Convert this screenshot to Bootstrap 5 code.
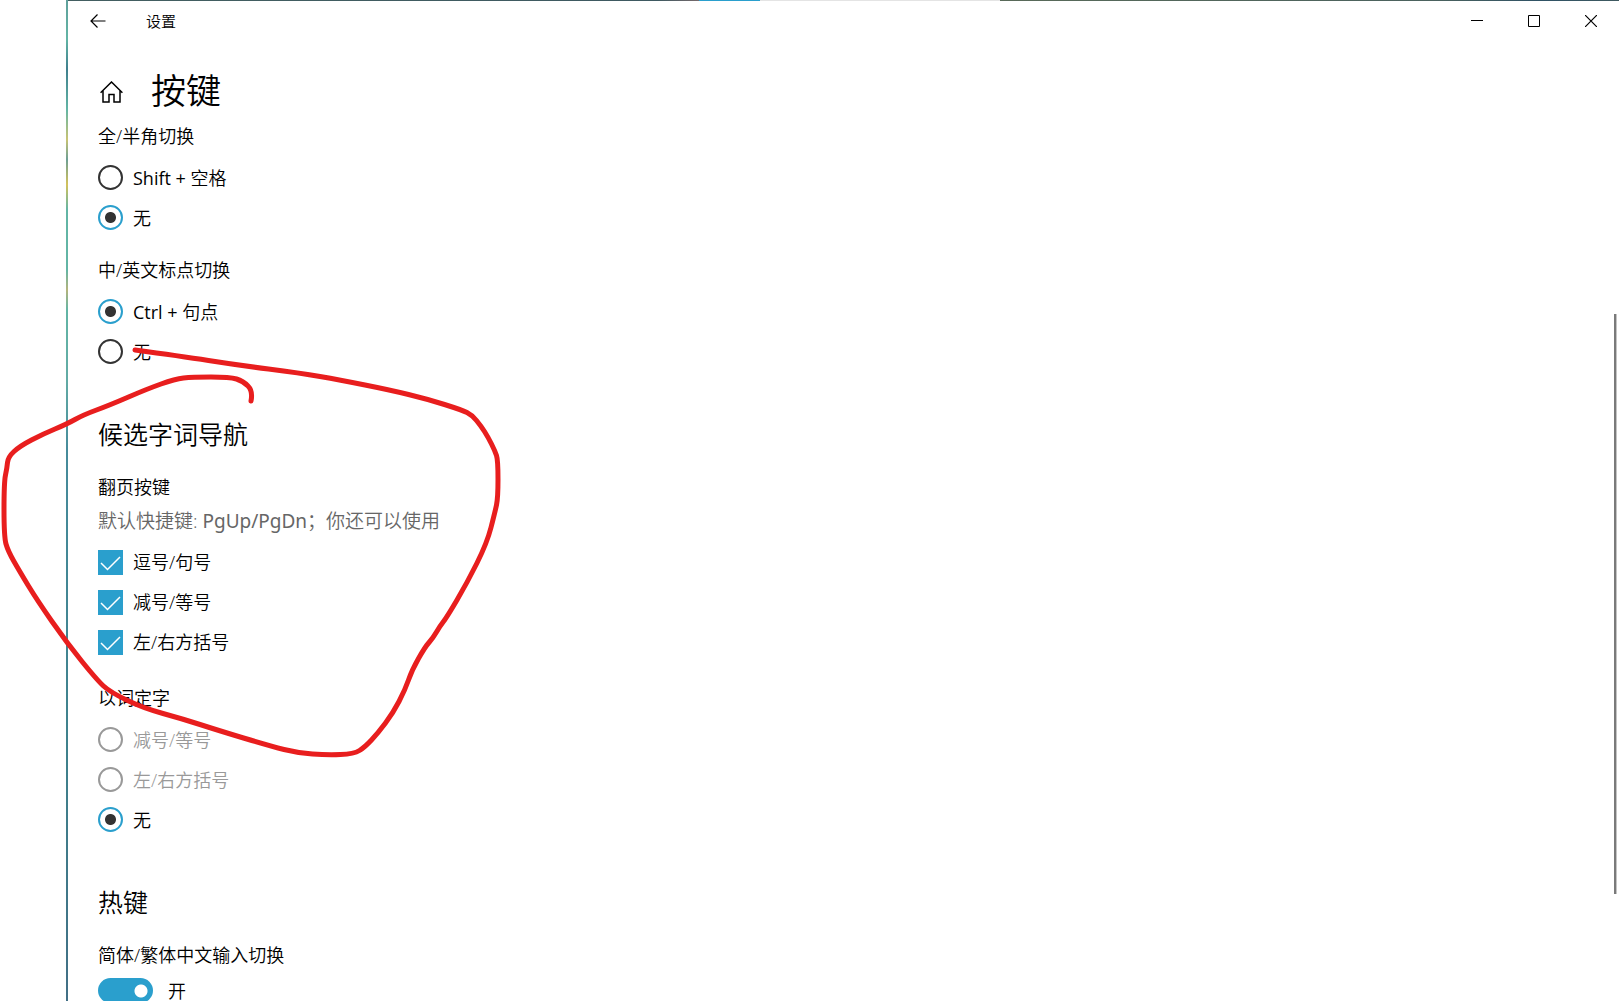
<!DOCTYPE html>
<html lang="zh-CN">
<head>
<meta charset="utf-8">
<meta name="viewport" content="width=device-width, initial-scale=1">
<title>设置</title>
<link href="https://cdn.jsdelivr.net/npm/bootstrap@5.3.0/dist/css/bootstrap.min.css" rel="stylesheet">
<style>
:root { --accent: #2a9fcd; --ink: #333; }
body { font-family: "Open Sans", "Noto Sans CJK SC", sans-serif; font-weight: 350; font-size: 18px; line-height: 28px; color: #000; background: #fff; padding-left: 66px; }
.win { border-left: 2px solid; border-image: linear-gradient(#5f9f9b 0, #62b5a5 4%, #3f7f8d 7%, #62b5a5 11%, #c9c474 14%, #6d9f94 16%, #d4c25b 18.5%, #62b5a5 21%, #62b5a5 27%, #b5b47c 29%, #62b5a5 31%, #62aba5 38%, #468b9b 45%, #3f818c 75%, #416f85 100%) 1; }
.topline { height: 1px; background: linear-gradient(90deg, #435f61 0, #3e5961 38%, #776a6c 40.7%, var(--accent) 40.7%, var(--accent) 44.6%, #e4e4e4 44.6%, #e4e4e4 60.1%, #596a59 60.1%, #4b625e 88%, #2f5265 95%, #3f5a60 100%); }
.titlebar { height: 39px; font-size: 15px; line-height: 20px; }
.titlebar button { border: 0; background: none; padding: 0; height: 39px; width: 57px; color: #000; display: flex; align-items: center; justify-content: center; }
.titlebar .back { width: 59px; margin-right: 19px; }
.titlebar svg, .home svg { display: block; }
.page-head { height: 82px; padding: 11px 0 0 32px; gap: 28px; }
.page-head h1 { font-size: 35px; line-height: 80px; font-weight: 350; margin: 0; }
.home { color: #000; padding-top: 30px; }
.pane { padding-left: 30px; }
.pane h2 { font-size: 25px; line-height: 40px; font-weight: 350; margin: 43px 0 19px; }
.pane legend, .grp-title { font-size: 18px; line-height: 28px; margin: 0 0 7px; float: none; }
.grp + .grp { margin-top: 19px; }
.grp.after-checks { margin-top: 22px; }
.hint { font-size: 19px; line-height: 31px; color: #666; margin: -2px 0 5px; }
.hint kbd { font: inherit; font-family: "Noto Sans", sans-serif; font-weight: 400; line-height: 1; color: inherit; background: none; padding: 0; }
.opt { height: 40px; gap: 10px; }
.opt input { appearance: none; width: 25px; height: 25px; margin: 0; flex: none; }
.opt input[type=radio] { border: 2px solid var(--ink); border-radius: 50%; }
.opt input[type=radio] + label { padding-top: 2px; }
.opt input[type=radio]:checked { border-color: var(--accent); background: radial-gradient(circle, var(--ink) 5px, transparent 6px); }
.opt input[type=radio]:disabled { border-color: #999; }
.opt input:disabled + label { color: #999; }
.opt input[type=checkbox] { background: var(--accent) url("data:image/svg+xml,%3Csvg xmlns='http://www.w3.org/2000/svg' viewBox='0 0 25 25'%3E%3Cpath d='M3 13l6.500 6.500L22 7' fill='none' stroke='white' stroke-width='1.500'/%3E%3C/svg%3E"); }
.switch-row { gap: 15px; margin-top: 9px; height: 25px; }
.switch-row input { appearance: none; margin: 0; width: 55px; height: 25px; border-radius: 13px; background: radial-gradient(circle at 43px 13px, #fff 6px, transparent 7px) var(--accent); }
.thumb { position: absolute; right: 2px; top: 31.4%; height: 57.9%; width: 3px; background: #7a7a7a; border-right: 1px solid #c4c4c4; }
.ink { position: absolute; left: 0; top: 0; pointer-events: none; }
</style>
<script src="https://cdn.jsdelivr.net/npm/bootstrap@5.3.0/dist/js/bootstrap.bundle.min.js"></script>
</head>
<body class="vh-100 overflow-hidden position-relative">
<div class="win h-100 overflow-hidden">
  <div class="topline"></div>
  <header class="titlebar d-flex align-items-center">
    <button class="back" type="button" aria-label="返回"><svg width="16" height="14" fill="none" stroke="currentColor" stroke-width="1.200"><path d="M15.500 7H1M7.500.5 1 7l6.500 6.500"/></svg></button>
    <span class="me-auto">设置</span>
    <button type="button" aria-label="最小化"><svg width="12" height="12" stroke="currentColor"><path d="M0 5.500h12"/></svg></button>
    <button type="button" aria-label="最大化"><svg width="12" height="12" fill="none" stroke="currentColor"><path d="M.5.5h11v11H.5z"/></svg></button>
    <button type="button" aria-label="关闭"><svg width="12" height="12" fill="none" stroke="currentColor" stroke-width="1.200"><path d="M0 0l12 12M12 0 0 12"/></svg></button>
  </header>
  <div class="page-head d-flex align-items-start">
    <a class="home" href="#" aria-label="主页"><svg width="23" height="22" fill="none" stroke="currentColor" stroke-width="1.500"><path d="M.6 11.700 11.500 1l10.900 10.700M3 9.500V21h6v-7.500h5V21h6V9.500"/></svg></a>
    <h1>按键</h1>
  </div>
  <main class="pane">
    <fieldset class="grp">
      <legend>全/半角切换</legend>
      <div class="opt d-flex align-items-center"><input type="radio" name="width" id="w1"><label for="w1"><span class="fw-normal">Shift +</span> 空格</label></div>
      <div class="opt d-flex align-items-center"><input type="radio" name="width" id="w2" checked><label for="w2">无</label></div>
    </fieldset>
    <fieldset class="grp">
      <legend>中/英文标点切换</legend>
      <div class="opt d-flex align-items-center"><input type="radio" name="punct" id="p1" checked><label for="p1"><span class="fw-normal">Ctrl +</span> 句点</label></div>
      <div class="opt d-flex align-items-center"><input type="radio" name="punct" id="p2"><label for="p2">无</label></div>
    </fieldset>
    <h2>候选字词导航</h2>
    <fieldset class="grp">
      <legend>翻页按键</legend>
      <p class="hint">默认快捷键: <kbd>PgUp/PgDn</kbd>；你还可以使用</p>
      <div class="opt d-flex align-items-center"><input type="checkbox" id="c1" checked><label for="c1">逗号/句号</label></div>
      <div class="opt d-flex align-items-center"><input type="checkbox" id="c2" checked><label for="c2">减号/等号</label></div>
      <div class="opt d-flex align-items-center"><input type="checkbox" id="c3" checked><label for="c3">左/右方括号</label></div>
    </fieldset>
    <fieldset class="grp after-checks">
      <legend>以词定字</legend>
      <div class="opt d-flex align-items-center"><input type="radio" name="pick" id="k1" disabled><label for="k1">减号/等号</label></div>
      <div class="opt d-flex align-items-center"><input type="radio" name="pick" id="k2" disabled><label for="k2">左/右方括号</label></div>
      <div class="opt d-flex align-items-center"><input type="radio" name="pick" id="k3" checked><label for="k3">无</label></div>
    </fieldset>
    <h2>热键</h2>
    <div class="grp-title" id="st">简体/繁体中文输入切换</div>
    <div class="switch-row d-flex align-items-center"><input type="checkbox" role="switch" id="s1" aria-describedby="st" checked><label for="s1">开</label></div>
  </main>
</div>
<div class="thumb"></div>
<svg class="ink" width="520" height="780" fill="none" stroke="#e81e1e" stroke-width="5" stroke-linecap="round" stroke-linejoin="round"><path id="stroke"/></svg>
<script>
// Pen samples, joined by curves through the midpoints of neighbouring samples
const pts = [[135,350],[180,356],[237,365],[300,373],[340,380],[390,390],[427,399],[462,410],[472,415],[481,426],[488,437],[495,451],[498,460],[498,498],[495,512],[487,543],[467,583],[447,617],[440,626],[433,638],[425,647],[412,670],[405,690],[393,713],[378,733],[365,747],[354,754],[327,755],[298,753],[270,746],[217,730],[183,719],[143,708],[110,692],[97,680],[67,643],[37,600],[20,572],[8,551],[4,537],[4,482],[7,468],[8,457],[20,446],[43,434],[67,424],[83,415],[110,405],[147,389],[175,379],[192,377],[230,377],[243,381],[253,391],[251,401]];
let d = "M" + pts[0];
for (let i = 1; i < pts.length - 1; i++) {
  const [x, y] = pts[i], [u, v] = pts[i + 1];
  d += i === pts.length - 2 ? `Q${x} ${y} ${u} ${v}` : `Q${x} ${y} ${(x + u) / 2} ${(y + v) / 2}`;
}
document.getElementById("stroke").setAttribute("d", d);
</script>
</body>
</html>
